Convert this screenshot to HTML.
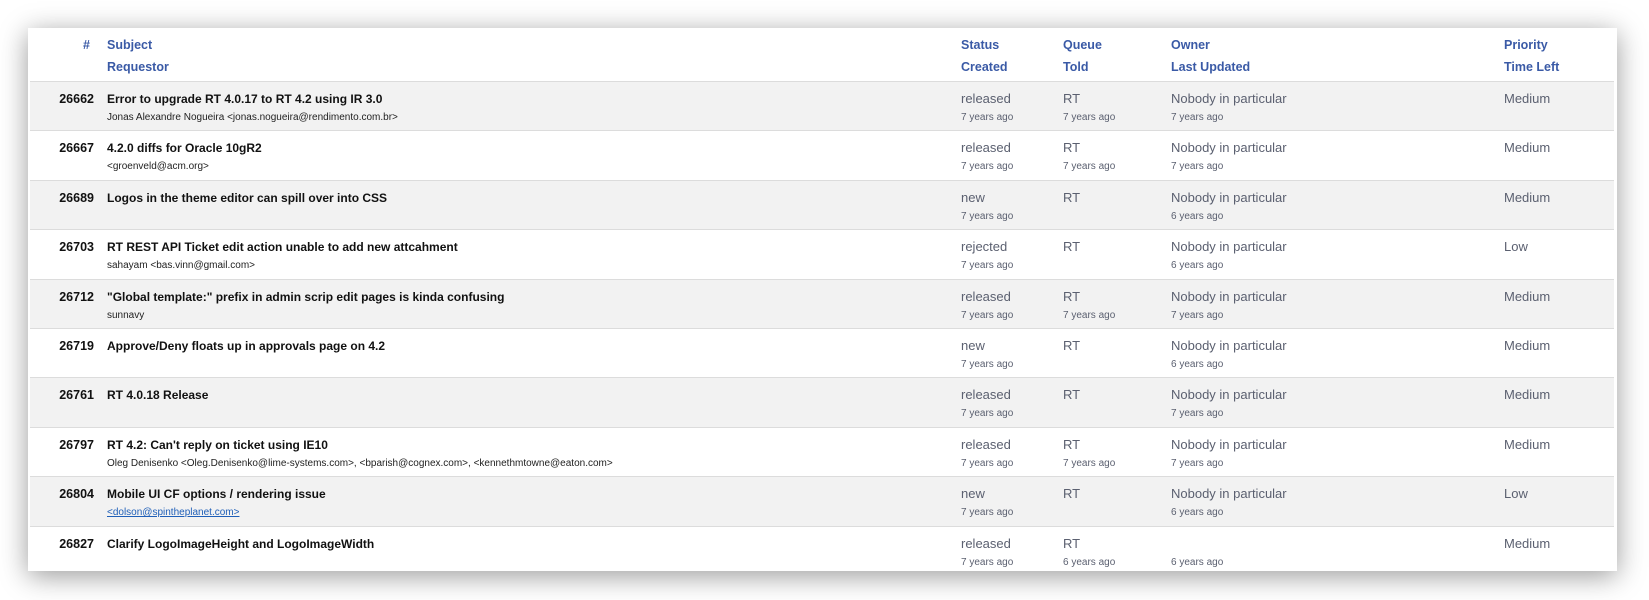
<!DOCTYPE html>
<html><head><meta charset="utf-8"><style>
body{margin:0;width:1649px;height:600px;background:#fff;font-family:"Liberation Sans",Arial,sans-serif;position:relative;overflow:hidden}
.card{position:absolute;left:28px;top:28px;width:1589px;height:543px;background:#fff;box-shadow:0 5px 26px rgba(0,0,0,.4)}
.t{position:absolute;white-space:nowrap;line-height:1}
.h{font-weight:bold;color:#3a5aa6;font-size:12.5px}
.row{position:absolute;left:30px;width:1584px;border-top:1px solid #dcdcdc;height:49px}
.g{background:#f2f2f2}
.n{font-weight:bold;font-size:12.5px;color:#111;text-align:right}
.s{font-weight:bold;font-size:12px;color:#111;left:77px}
.r{font-size:10px;color:#222;left:77px}
.v{font-size:13px;color:#5b6070}
.sm{font-size:10px;color:#5b6070}
a{color:#1f5fb8;text-decoration:underline}
</style></head><body>
<div class="card"></div>
<div class="t h" style="left:83px;top:39px">#</div>
<div class="t h" style="left:107px;top:39px">Subject</div>
<div class="t h" style="left:107px;top:61px">Requestor</div>
<div class="t h" style="left:961px;top:39px">Status</div>
<div class="t h" style="left:961px;top:61px">Created</div>
<div class="t h" style="left:1063px;top:39px">Queue</div>
<div class="t h" style="left:1063px;top:61px">Told</div>
<div class="t h" style="left:1171px;top:39px">Owner</div>
<div class="t h" style="left:1171px;top:61px">Last Updated</div>
<div class="t h" style="left:1504px;top:39px">Priority</div>
<div class="t h" style="left:1504px;top:61px">Time Left</div>

<div class="row g" style="top:81px"><div class="t n" style="top:11px;left:0;width:64px">26662</div><div class="t s" style="top:11px">Error to upgrade RT 4.0.17 to RT 4.2 using IR 3.0</div><div class="t r" style="top:31px">Jonas Alexandre Nogueira &lt;jonas.nogueira@rendimento.com.br&gt;</div><div class="t v" style="left:931px;top:10px">released</div><div class="t sm" style="left:931px;top:31px">7 years ago</div><div class="t v" style="left:1033px;top:10px">RT</div><div class="t sm" style="left:1033px;top:31px">7 years ago</div><div class="t v" style="left:1141px;top:10px">Nobody in particular</div><div class="t sm" style="left:1141px;top:31px">7 years ago</div><div class="t v" style="left:1474px;top:10px">Medium</div></div>

<div class="row" style="top:130.4px"><div class="t n" style="top:11px;left:0;width:64px">26667</div><div class="t s" style="top:11px">4.2.0 diffs for Oracle 10gR2</div><div class="t r" style="top:31px">&lt;groenveld@acm.org&gt;</div><div class="t v" style="left:931px;top:10px">released</div><div class="t sm" style="left:931px;top:31px">7 years ago</div><div class="t v" style="left:1033px;top:10px">RT</div><div class="t sm" style="left:1033px;top:31px">7 years ago</div><div class="t v" style="left:1141px;top:10px">Nobody in particular</div><div class="t sm" style="left:1141px;top:31px">7 years ago</div><div class="t v" style="left:1474px;top:10px">Medium</div></div>

<div class="row g" style="top:179.8px"><div class="t n" style="top:11px;left:0;width:64px">26689</div><div class="t s" style="top:11px">Logos in the theme editor can spill over into CSS</div><div class="t v" style="left:931px;top:10px">new</div><div class="t sm" style="left:931px;top:31px">7 years ago</div><div class="t v" style="left:1033px;top:10px">RT</div><div class="t v" style="left:1141px;top:10px">Nobody in particular</div><div class="t sm" style="left:1141px;top:31px">6 years ago</div><div class="t v" style="left:1474px;top:10px">Medium</div></div>

<div class="row" style="top:229.2px"><div class="t n" style="top:11px;left:0;width:64px">26703</div><div class="t s" style="top:11px">RT REST API Ticket edit action unable to add new attcahment</div><div class="t r" style="top:31px">sahayam &lt;bas.vinn@gmail.com&gt;</div><div class="t v" style="left:931px;top:10px">rejected</div><div class="t sm" style="left:931px;top:31px">7 years ago</div><div class="t v" style="left:1033px;top:10px">RT</div><div class="t v" style="left:1141px;top:10px">Nobody in particular</div><div class="t sm" style="left:1141px;top:31px">6 years ago</div><div class="t v" style="left:1474px;top:10px">Low</div></div>

<div class="row g" style="top:278.6px"><div class="t n" style="top:11px;left:0;width:64px">26712</div><div class="t s" style="top:11px">"Global template:" prefix in admin scrip edit pages is kinda confusing</div><div class="t r" style="top:31px">sunnavy</div><div class="t v" style="left:931px;top:10px">released</div><div class="t sm" style="left:931px;top:31px">7 years ago</div><div class="t v" style="left:1033px;top:10px">RT</div><div class="t sm" style="left:1033px;top:31px">7 years ago</div><div class="t v" style="left:1141px;top:10px">Nobody in particular</div><div class="t sm" style="left:1141px;top:31px">7 years ago</div><div class="t v" style="left:1474px;top:10px">Medium</div></div>

<div class="row" style="top:328px"><div class="t n" style="top:11px;left:0;width:64px">26719</div><div class="t s" style="top:11px">Approve/Deny floats up in approvals page on 4.2</div><div class="t v" style="left:931px;top:10px">new</div><div class="t sm" style="left:931px;top:31px">7 years ago</div><div class="t v" style="left:1033px;top:10px">RT</div><div class="t v" style="left:1141px;top:10px">Nobody in particular</div><div class="t sm" style="left:1141px;top:31px">6 years ago</div><div class="t v" style="left:1474px;top:10px">Medium</div></div>

<div class="row g" style="top:377.4px"><div class="t n" style="top:11px;left:0;width:64px">26761</div><div class="t s" style="top:11px">RT 4.0.18 Release</div><div class="t v" style="left:931px;top:10px">released</div><div class="t sm" style="left:931px;top:31px">7 years ago</div><div class="t v" style="left:1033px;top:10px">RT</div><div class="t v" style="left:1141px;top:10px">Nobody in particular</div><div class="t sm" style="left:1141px;top:31px">7 years ago</div><div class="t v" style="left:1474px;top:10px">Medium</div></div>

<div class="row" style="top:426.8px"><div class="t n" style="top:11px;left:0;width:64px">26797</div><div class="t s" style="top:11px">RT 4.2: Can't reply on ticket using IE10</div><div class="t r" style="top:31px">Oleg Denisenko &lt;Oleg.Denisenko@lime-systems.com&gt;, &lt;bparish@cognex.com&gt;, &lt;kennethmtowne@eaton.com&gt;</div><div class="t v" style="left:931px;top:10px">released</div><div class="t sm" style="left:931px;top:31px">7 years ago</div><div class="t v" style="left:1033px;top:10px">RT</div><div class="t sm" style="left:1033px;top:31px">7 years ago</div><div class="t v" style="left:1141px;top:10px">Nobody in particular</div><div class="t sm" style="left:1141px;top:31px">7 years ago</div><div class="t v" style="left:1474px;top:10px">Medium</div></div>

<div class="row g" style="top:476.2px"><div class="t n" style="top:11px;left:0;width:64px">26804</div><div class="t s" style="top:11px">Mobile UI CF options / rendering issue</div><div class="t r" style="top:31px"><a>&lt;dolson@spintheplanet.com&gt;</a></div><div class="t v" style="left:931px;top:10px">new</div><div class="t sm" style="left:931px;top:31px">7 years ago</div><div class="t v" style="left:1033px;top:10px">RT</div><div class="t v" style="left:1141px;top:10px">Nobody in particular</div><div class="t sm" style="left:1141px;top:31px">6 years ago</div><div class="t v" style="left:1474px;top:10px">Low</div></div>

<div class="row" style="top:525.6px;height:45px"><div class="t n" style="top:11px;left:0;width:64px">26827</div><div class="t s" style="top:11px">Clarify LogoImageHeight and LogoImageWidth</div><div class="t v" style="left:931px;top:10px">released</div><div class="t sm" style="left:931px;top:31px">7 years ago</div><div class="t v" style="left:1033px;top:10px">RT</div><div class="t sm" style="left:1033px;top:31px">6 years ago</div><div class="t sm" style="left:1141px;top:31px">6 years ago</div><div class="t v" style="left:1474px;top:10px">Medium</div></div>
</body></html>
